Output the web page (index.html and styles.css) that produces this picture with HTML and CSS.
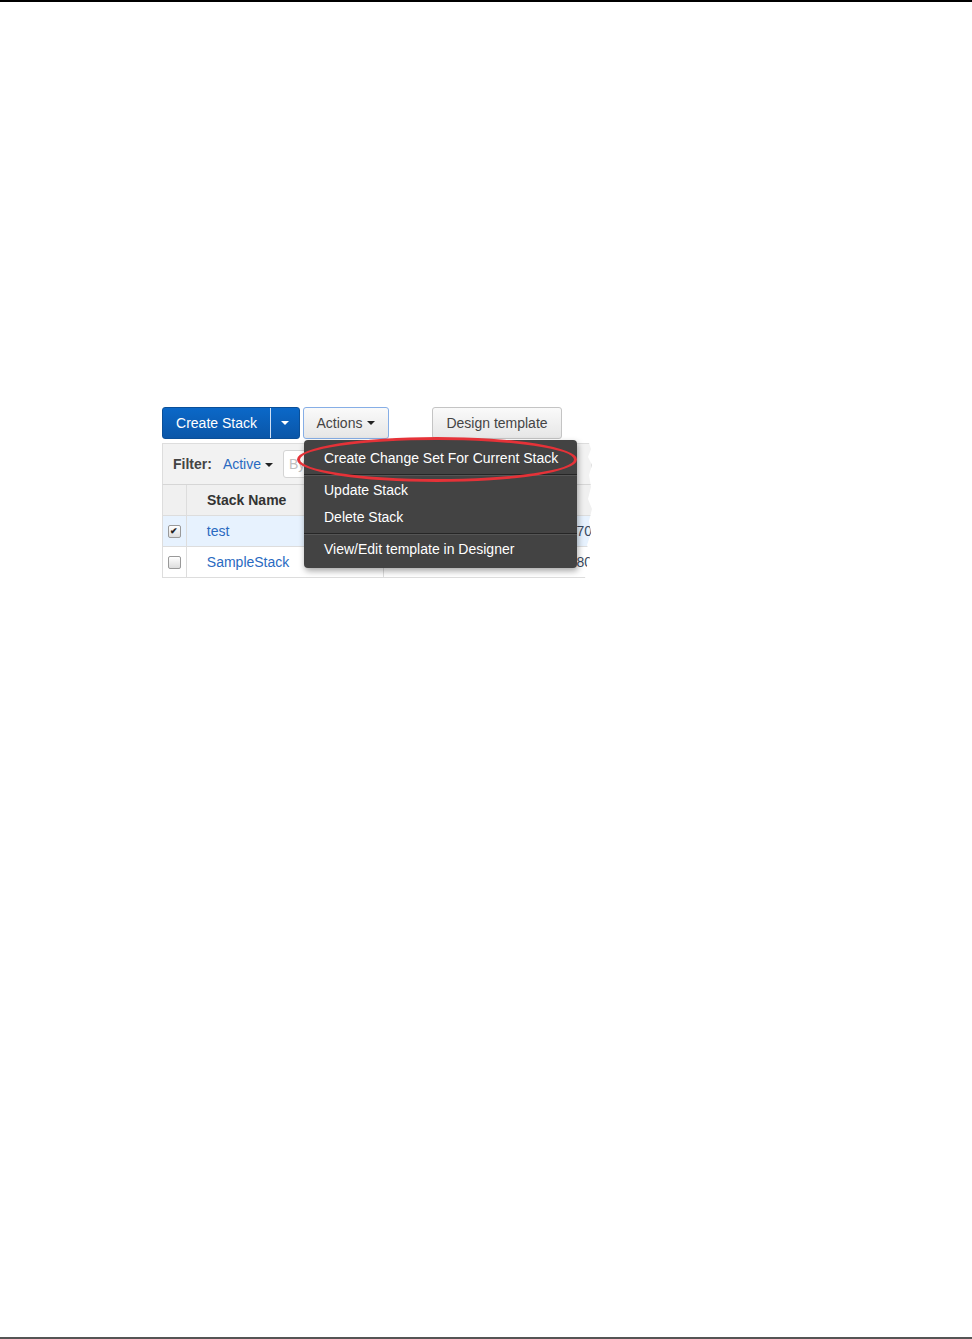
FILE: index.html
```html
<!DOCTYPE html>
<html lang="en">
<head>
  <meta charset="UTF-8">
  <title>Create Change Set</title>
  <link rel="stylesheet" href="styles.css">
</head>
<body>
  <div class="top-rule"></div>
  <main class="page">
    <div class="shot">
      <div class="toolbar">
        <div class="split-btn">
          <span class="split-main">Create Stack</span>
          <span class="split-caret"><span class="caret caret-white"></span></span>
        </div>
        <span class="btn btn-focus">Actions <span class="caret"></span></span>
        <span class="btn btn-design">Design template</span>
      </div>

      <div class="clip">
        <div class="filter-bar">
          <span class="filter-label">Filter:</span>
          <span class="filter-value">Active <span class="caret caret-blue"></span></span>
          <span class="filter-input">By</span>
        </div>
        <div class="grid-row grid-head">
          <div class="cell cell-check"></div>
          <div class="cell cell-name">Stack Name</div>
          <div class="cell cell-rest"></div>
        </div>
        <div class="grid-row grid-selected">
          <div class="cell cell-check"><span class="box box-checked">&#10004;</span></div>
          <div class="cell cell-name link">test</div>
          <div class="cell cell-rest"><span class="num">70</span></div>
        </div>
        <div class="grid-row">
          <div class="cell cell-check"><span class="box"></span></div>
          <div class="cell cell-name link">SampleStack</div>
          <div class="cell cell-rest"><span class="num">80</span></div>
        </div>
      </div>

      <ul class="menu">
        <li class="menu-item">Create Change Set For Current Stack</li>
        <li class="menu-sep"></li>
        <li class="menu-item">Update Stack</li>
        <li class="menu-item">Delete Stack</li>
        <li class="menu-sep"></li>
        <li class="menu-item">View/Edit template in Designer</li>
      </ul>
      <div class="highlight"></div>
    </div>
  </main>
  <div class="bottom-rule"></div>
</body>
</html>
```

FILE: styles.css
```css
html, body {
  margin: 0;
  padding: 0;
}
body {
  height: 1339px;
  display: flex;
  flex-direction: column;
  font-family: "Liberation Sans", Arial, sans-serif;
  font-size: 14px;
  color: #333;
  background: #fff;
}
.top-rule {
  height: 2px;
  background: #000;
}
.bottom-rule {
  height: 2px;
  background: #555;
}
.page {
  flex: 1;
  padding: 405px 0 0 162px;
}
.shot {
  position: relative;
  width: 440px;
}
.toolbar {
  display: flex;
  align-items: stretch;
  height: 32px;
  gap: 4px;
}
.split-btn {
  display: flex;
  border-radius: 3px;
  overflow: hidden;
  background: linear-gradient(#0b68c8, #0a56a8);
  color: #fff;
  border: 1px solid #0a4f98;
  box-sizing: border-box;
}
.split-main {
  width: 107px;
  display: flex;
  align-items: center;
  justify-content: center;
  font-size: 14px;
}
.split-caret {
  width: 28px;
  display: flex;
  align-items: center;
  justify-content: center;
  border-left: 1px solid #cfe0f5;
}
.caret {
  display: inline-block;
  width: 0;
  height: 0;
  border-left: 4px solid transparent;
  border-right: 4px solid transparent;
  border-top: 4px solid #222;
  vertical-align: middle;
  margin-left: 2px;
}
.caret-white {
  border-top-color: #fff;
  margin-left: 0;
}
.caret-blue {
  border-top-color: #222;
  margin-left: 0;
}
.btn {
  display: flex;
  align-items: center;
  justify-content: center;
  box-sizing: border-box;
  border-radius: 3px;
  border: 1px solid #c4c4c4;
  background: linear-gradient(#fafafa, #e6e6e6);
  color: #444;
  font-size: 14px;
  gap: 3px;
}
.btn-focus {
  width: 86px;
  margin-left: -1px;
  border-color: #86aee6;
}
.btn-design {
  width: 130px;
  margin-left: 39px;
}
.clip {
  margin-top: 4px;
  width: 430px;
  clip-path: polygon(0 0, 427px 0, 429px 6px, 426px 14px, 430px 22px, 427px 32px, 429px 44px, 426px 56px, 430px 66px, 427px 78px, 429px 90px, 425px 102px, 428px 114px, 424px 126px, 423px 136px, 0 136px);
}
.filter-bar {
  height: 42px;
  box-sizing: border-box;
  background: #f2f2f2;
  border: 1px solid #ddd;
  border-bottom: 1px solid #d6d6d6;
  display: flex;
  align-items: center;
  padding-left: 10px;
}
.filter-label {
  font-weight: bold;
  color: #444;
  margin-right: 11px;
}
.filter-value {
  color: #2a6ac1;
  margin-right: 10px;
}
.filter-input {
  width: 140px;
  height: 28px;
  box-sizing: border-box;
  border: 1px solid #d4d4d4;
  border-radius: 3px;
  background: #fff;
  color: #c0c0c0;
  display: flex;
  align-items: center;
  padding-left: 5px;
}
.grid-row {
  display: flex;
  height: 31px;
  border-bottom: 1px solid #ddd;
  box-sizing: border-box;
  background: #fff;
}
.grid-head {
  height: 31px;
  background: #f0f0f0;
  font-weight: bold;
  color: #333;
}
.grid-selected {
  background: #e7f2fe;
}
.cell {
  display: flex;
  align-items: center;
  box-sizing: border-box;
}
.cell-check {
  width: 25px;
  justify-content: center;
  border-left: 1px solid #ddd;
  border-right: 1px solid #ddd;
}
.cell-name {
  width: 199px;
  padding-left: 20px;
  border-right: 1px solid #ddd;
}
.cell-rest {
  flex: 1;
  padding-left: 192px;
}
.link {
  color: #2a6ac1;
}
.box {
  width: 11px;
  height: 11px;
  border: 1px solid #999;
  border-radius: 2px;
  background: linear-gradient(#fff, #ddd);
  display: flex;
  align-items: center;
  justify-content: center;
  font-size: 9px;
  font-weight: bold;
  line-height: 1;
  color: #222;
}
.num {
  color: #3a4a60;
}
.menu {
  position: absolute;
  left: 142px;
  top: 33px;
  width: 273px;
  margin: 0;
  padding: 5px 0 6px;
  list-style: none;
  background: #434343;
  border-radius: 4px;
  box-shadow: 1px 3px 6px rgba(0, 0, 0, 0.35);
  color: #fff;
  font-size: 14px;
}
.menu-item {
  height: 26px;
  line-height: 26px;
  padding-left: 20px;
}
.menu-item + .menu-item {
  margin-top: 1px;
}
.menu-sep {
  height: 1px;
  background: #262626;
  border-bottom: 1px solid #555;
  margin: 3px 0 1px;
}
.highlight {
  position: absolute;
  left: 135px;
  top: 30px;
  width: 280px;
  height: 45px;
  border: 3px solid #e53238;
  border-radius: 50%;
  box-sizing: border-box;
}
```
